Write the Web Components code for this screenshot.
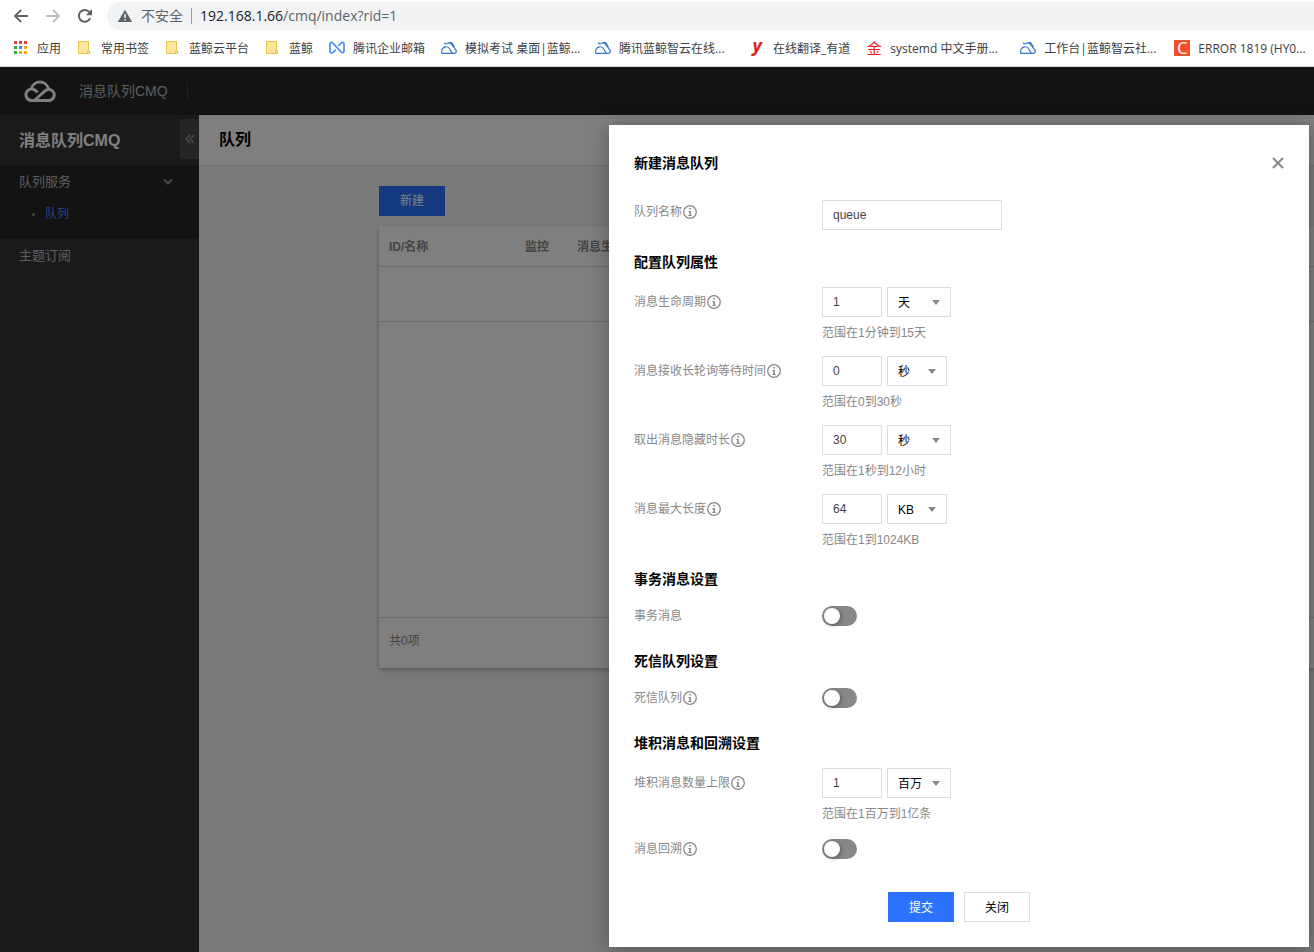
<!DOCTYPE html>
<html lang="zh-CN">
<head>
<meta charset="utf-8">
<title>消息队列CMQ</title>
<style>
  html, body { margin: 0; }
  body {
    min-height: 100vh;
    display: flex;
    flex-direction: column;
    font: 12px/18px "Liberation Sans", "Noto Sans CJK SC", sans-serif;
    color: #000;
    background: #fff;
    overflow-x: hidden;
  }
</style>
</head>
<body>
<browser-bar host="192.168.1.66" path="/cmq/index?rid=1">
  <book-mark icon="apps">应用</book-mark>
  <book-mark icon="folder">常用书签</book-mark>
  <book-mark icon="folder">蓝鲸云平台</book-mark>
  <book-mark icon="folder">蓝鲸</book-mark>
  <book-mark icon="mail">腾讯企业邮箱</book-mark>
  <book-mark icon="hill" wide>模拟考试 桌面|蓝鲸...</book-mark>
  <book-mark icon="hill" wide>腾讯蓝鲸智云在线...</book-mark>
  <book-mark icon="youdao">在线翻译_有道</book-mark>
  <book-mark icon="gold" wide>systemd 中文手册...</book-mark>
  <book-mark icon="hill" wide>工作台|蓝鲸智云社...</book-mark>
  <book-mark icon="csdn" wide>ERROR 1819 (HY0...</book-mark>
</browser-bar>

<cmq-app>
  <cmq-topbar slot="top">消息队列CMQ</cmq-topbar>
  <cmq-sidebar slot="side"></cmq-sidebar>
  <queue-page slot="main"></queue-page>
  <cmq-dialog slot="overlay" heading="新建消息队列">
    <form-section>
      <form-field compact label="队列名称" info value="queue" wide></form-field>
    </form-section>
    <form-section heading="配置队列属性">
      <form-field label="消息生命周期" info value="1" unit="天" roomy hint="范围在1分钟到15天"></form-field>
      <form-field label="消息接收长轮询等待时间" info value="0" unit="秒" hint="范围在0到30秒"></form-field>
      <form-field label="取出消息隐藏时长" info value="30" unit="秒" roomy hint="范围在1秒到12小时"></form-field>
      <form-field label="消息最大长度" info value="64" unit="KB" hint="范围在1到1024KB"></form-field>
    </form-section>
    <form-section heading="事务消息设置">
      <switch-field label="事务消息"></switch-field>
    </form-section>
    <form-section heading="死信队列设置">
      <switch-field label="死信队列" info></switch-field>
    </form-section>
    <form-section heading="堆积消息和回溯设置">
      <form-field label="堆积消息数量上限" info value="1" unit="百万" roomy hint="范围在1百万到1亿条"></form-field>
      <switch-field label="消息回溯" info></switch-field>
    </form-section>
    <cmq-button slot="actions" kind="primary">提交</cmq-button>
    <cmq-button slot="actions">关闭</cmq-button>
  </cmq-dialog>
</cmq-app>

<script>
const define = (name, render) => customElements.define(name, class extends HTMLElement {
  connectedCallback() {
    if (this.shadowRoot) return;
    this.attachShadow({ mode: "open" }).innerHTML = render(this);
  }
});

const ICONS = {
  back: `<svg width="16" height="16" viewBox="0 0 16 16" fill="none" stroke="#5f6368" stroke-width="1.8"><path d="M15 8H2.5M8.2 1.8 2 8l6.2 6.2"/></svg>`,
  forward: `<svg width="16" height="16" viewBox="0 0 16 16" fill="none" stroke="#babcbe" stroke-width="1.8"><path d="M1 8h12.5M7.8 1.8 14 8l-6.2 6.2"/></svg>`,
  reload: `<svg width="16" height="16" viewBox="0 0 16 16"><path d="M13.2 10.2A5.9 5.9 0 1 1 12.4 4.2" fill="none" stroke="#5f6368" stroke-width="2"/><path d="M15 1v6.2H8.8z" fill="#5f6368"/></svg>`,
  warn: `<svg width="16" height="16" viewBox="0 0 16 16"><path d="M8 1.8 15.2 14H.8z" fill="#5f6368"/><path d="M8 6v4M8 11v1.6" stroke="#f1f3f4" stroke-width="1.5"/></svg>`,
  apps: `<svg width="16" height="16" viewBox="0 0 16 16"><path fill="#ea4335" d="M1 1h3v3H1zM6 1h3v3H6zM11 1h3v3h-3z"/><path fill="#34a853" d="M1 6h3v3H1zM1 11h3v3H1z"/><path fill="#4285f4" d="M6 6h3v3H6z"/><path fill="#fbab05" d="M11 6h3v3h-3zM6 11h3v3H6zM11 11h3v3h-3z"/></svg>`,
  folder: `<svg width="16" height="16" viewBox="0 0 16 16"><path d="M1.500 1.500h10v9h1v3h-11z" fill="#fde69a" stroke="#e6c54a"/><path d="M10.500 13.500v-3h1" fill="none" stroke="#e6c54a"/></svg>`,
  mail: `<svg width="16" height="16" viewBox="0 0 16 16" fill="none" stroke="#4a8ff0" stroke-width="1.700"><path d="M6.800 9.600 4 12.500c-.9.900-3 .8-3-1V4c0-1.400 1.600-2.200 2.800-1L12 11.800c1.200 1.400 3 1.200 3-.5V4c0-1.600-1.800-2-2.800-1L9.300 6"/></svg>`,
  hill: `<svg width="16" height="16" viewBox="0 0 16 16" fill="none" stroke="#3476c8" stroke-width="1.200" stroke-linejoin="round"><path d="M11.500 13.300H.8c-.6-3.200.6-6 3.700-6.500 2.200-.3 3.600.8 4.600 2.700 1 1.800 1.400 2.700 2.400 3.800h1.700c2.200-.2 2.500-2.200 1.600-3.500L10.200 4C9 2.500 6.800 2.300 5.200 4.200M3.200 2.800l1.500 1.400M8 2.600h2.500l3 4.600"/></svg>`,
  youdao: `<b style="color:#e21a1a;font:italic bold 18px/14px 'Open Sans',sans-serif;padding-bottom:6px">y</b>`,
  gold: `<span style="color:#e8211c;font:15px/16px 'Noto Sans CJK SC',sans-serif">金</span>`,
  csdn: `<span style="background:#f0512b;color:#fff;font:16px/16px 'Open Sans',sans-serif;width:16px;text-align:center">C</span>`,
  cloud: `<svg width="32" height="24" viewBox="0 0 32 24" fill="none" stroke="#fff" stroke-width="3"><path d="M24.400 9.600A8.800 8.800 0 0 0 7.400 9.600M13.800 13.400 11.600 11.600A5.700 5.700 0 1 0 7.200 21.400H25A5.500 5.500 0 1 0 21 11.900L10.800 21"/></svg>`,
  collapse: `<svg width="10" height="10" viewBox="0 0 10 10" fill="none" stroke="#a0a0a0" stroke-width="1.200"><path d="M5 1 1 5l4 4M9 1 5 5l4 4"/></svg>`,
  chevron: `<svg width="10" height="8" viewBox="0 0 10 8" fill="none" stroke="#909090" stroke-width="2.200"><path d="m1 1.500 4 4 4-4"/></svg>`,
  info: `<svg width="14" height="14" viewBox="0 0 14 14"><circle cx="7" cy="7" r="6.300" fill="none" stroke="#888" stroke-width="1.300"/><path d="M6.200 3h1.700v1.600H6.200zM5.400 6h2.500v4h.9v1H5.300v-1h1V7h-.9z" fill="#888"/></svg>`,
  close: `<svg width="12" height="12" viewBox="0 0 12 12" fill="none" stroke="#888" stroke-width="2"><path d="m1 1 10 10M11 1 1 11"/></svg>`
};

define("ui-icon", el => `
  <style>:host { display: inline-flex; flex: none; align-items: center; justify-content: center; } svg { display: block; }</style>
  ${ICONS[el.getAttribute("name")]}`);

define("browser-bar", el => `
  <style>
    :host { display: block; background: #fff; border-bottom: 1px solid #d5d8da; font-family: "Open Sans", "Noto Sans CJK SC", sans-serif; overflow: hidden; }
    .nav { display: flex; align-items: center; gap: 16px; height: 28px; padding: 2px 0 0 13px; }
    button { border: 0; padding: 0; background: none; display: flex; }
    .address { flex: 1; display: flex; align-items: center; gap: 8px; height: 28px; padding-left: 10px; margin-left: -2px; border-radius: 14px 0 0 14px; background: #f1f3f4; font-size: 14px; line-height: 20px; color: #5f6368; white-space: nowrap; }
    .sep { width: 1px; height: 16px; background: #9aa0a6; }
    b { font-weight: normal; color: #202124; }
    .marks { display: flex; gap: 16px; height: 36px; align-items: center; padding-left: 13px; }
  </style>
  <div class="nav">
    <button aria-label="后退"><ui-icon name="back"></ui-icon></button>
    <button aria-label="前进"><ui-icon name="forward"></ui-icon></button>
    <button aria-label="刷新"><ui-icon name="reload"></ui-icon></button>
    <div class="address"><ui-icon name="warn"></ui-icon><span>不安全</span><i class="sep"></i><span><b>${el.getAttribute("host")}</b>${el.getAttribute("path")}</span></div>
  </div>
  <nav class="marks"><slot></slot></nav>`);

define("book-mark", el => `
  <style>
    :host { display: block; flex: none; }
    a { display: flex; align-items: center; gap: 8px; color: #3c4043; text-decoration: none; white-space: nowrap; font-size: 12px; line-height: 18px; }
    ui-icon { width: 16px; height: 16px; }
    span { padding-top: 2px; }
    :host([wide]) span { width: 114px; }
  </style>
  <a href="#"><ui-icon name="${el.getAttribute("icon")}"></ui-icon><span><slot></slot></span></a>`);

define("cmq-app", () => `
  <style>
    :host { flex: 1; display: grid; grid-template: 1fr / minmax(0, 1fr); }
    .stage, .scrim { grid-area: 1 / 1; }
    .stage { display: grid; grid-template: 48px 1fr / 199px minmax(0, 1fr); }
    .top { grid-column: 1 / -1; }
    .top, .side, .main { display: grid; }
    .scrim { z-index: 1; display: flex; justify-content: flex-end; align-items: flex-start; padding: 58px 5px 5px; background: rgba(0, 0, 0, .5); overflow: hidden; }
  </style>
  <div class="stage">
    <div class="top"><slot name="top"></slot></div>
    <div class="side"><slot name="side"></slot></div>
    <div class="main"><slot name="main"></slot></div>
  </div>
  <div class="scrim"><slot name="overlay"></slot></div>`);

define("cmq-topbar", () => `
  <style>
    :host { display: flex; align-items: center; padding-left: 24px; background: #262626; color: #bbb; font-size: 14px; line-height: 20px; }
    a { display: flex; margin-right: 23px; }
    .name { padding-right: 19px; border-right: 1px solid #40434c; }
  </style>
  <a href="#" aria-label="首页"><ui-icon name="cloud"></ui-icon></a>
  <span class="name"><slot></slot></span>`);

define("cmq-sidebar", () => `
  <style>
    :host { display: block; background: #343434; color: #bbb; font-size: 13px; }
    header { display: flex; align-items: flex-start; justify-content: space-between; height: 46px; padding: 4px 0 0 19px; }
    h2 { margin: 0; font-size: 16px; line-height: 44px; color: #fff; }
    header button { width: 19px; height: 40px; padding: 0; border: 0; background: #4b4b4b; border-radius: 2px 0 0 2px; display: grid; place-items: center; }
    a { display: flex; align-items: center; justify-content: space-between; height: 34px; padding: 0 26px 0 19px; color: inherit; text-decoration: none; }
    .group { background: #262626; padding-bottom: 10px; }
    .sub { height: 30px; padding-left: 32px; justify-content: flex-start; gap: 10px; font-size: 12px; color: #4a86ff; }
    .sub::before { content: ""; width: 3px; height: 3px; background: #777; }
  </style>
  <header><h2>消息队列CMQ</h2><button aria-label="收起"><ui-icon name="collapse"></ui-icon></button></header>
  <nav>
    <div class="group">
      <a href="#">队列服务<ui-icon name="chevron"></ui-icon></a>
      <a href="#" class="sub">队列</a>
    </div>
    <a href="#">主题订阅</a>
  </nav>`);

define("queue-page", () => `
  <style>
    :host { display: block; background: #f2f2f2; }
    header { height: 50px; box-sizing: border-box; display: flex; align-items: center; padding-left: 20px; background: #fff; }
    header + section { border-top: 1px solid #d8d8d8; }
    h1 { margin: 0; font-size: 16px; line-height: 24px; }
    section { padding: 20px 0 0 180px; }
    .card { margin-top: 10px; background: #fff; box-shadow: 0 2px 4px rgba(0, 0, 0, .25); color: #888; }
    table { width: 100%; border-collapse: collapse; table-layout: fixed; }
    th { height: 38px; padding: 2px 10px 0; text-align: left; color: #888; border-bottom: 1px solid #d8d8d8; }
    th:nth-child(1) { width: 116px; }
    th:nth-child(2) { width: 32px; }
    td { height: 54px; padding: 0; border-bottom: 1px solid #d8d8d8; }
    .space { height: 295px; }
    footer { padding: 14px 10px 18px; border-top: 1px solid #d8d8d8; }
  </style>
  <header><h1>队列</h1></header>
  <section>
    <cmq-button kind="primary">新建</cmq-button>
    <div class="card">
      <table>
        <thead><tr><th>ID/名称</th><th>监控</th><th>消息生命周期</th></tr></thead>
        <tbody><tr><td colspan="3"></td></tr></tbody>
      </table>
      <div class="space"></div>
      <footer>共0项</footer>
    </div>
  </section>`);

define("cmq-button", () => `
  <style>
    :host { display: block; width: 66px; }
    button { width: 100%; height: 30px; padding: 0; border: 1px solid #ddd; background: #fff; color: #000; font: inherit; }
    :host([slot="actions"]) button { padding-top: 2px; }
    :host([kind="primary"]) button { border-color: #2a72ff; background: #2a72ff; color: #fff; }
  </style>
  <button type="button"><slot></slot></button>`);

define("cmq-dialog", el => `
  <style>
    :host { display: block; width: 700px; max-width: 100%; box-sizing: border-box; padding: 25px; background: #fff; box-shadow: 0 2px 20px rgba(0, 0, 0, .3); }
    header { display: flex; align-items: center; justify-content: space-between; height: 26px; margin-bottom: 24px; }
    h3 { margin: 0; font-size: 14px; line-height: 20px; }
    header button { border: 0; padding: 0; background: none; display: flex; }
    .body { display: grid; gap: 22px; }
    .actions { display: flex; justify-content: center; gap: 10px; margin-top: 30px; }
  </style>
  <div role="dialog" aria-label="${el.getAttribute("heading")}">
    <header><h3>${el.getAttribute("heading")}</h3><button aria-label="关闭"><ui-icon name="close"></ui-icon></button></header>
    <div class="body"><slot></slot></div>
    <div class="actions"><slot name="actions"></slot></div>
  </div>`);

define("form-section", el => `
  <style>
    :host { display: block; }
    h4 { margin: 0 0 15px; font-size: 14px; line-height: 20px; }
    .rows { display: grid; gap: 16px; }
  </style>
  ${el.hasAttribute("heading") ? `<h4>${el.getAttribute("heading")}</h4>` : ""}
  <div class="rows"><slot></slot></div>`);

const ROW_STYLE = `
  :host { display: grid; grid-template-columns: 188px 1fr; align-items: start; color: #888; }
  .label { display: flex; align-items: center; gap: 1px; height: 30px; }
  :host([compact]) .label { height: 24px; }
`;
const labelPart = el => `<div class="label"><label for="control">${el.getAttribute("label")}</label>${el.hasAttribute("info") ? `<ui-icon name="info"></ui-icon>` : ""}</div>`;

define("form-field", el => `
  <style>
    ${ROW_STYLE}
    .controls { display: flex; gap: 5px; }
    input, select { box-sizing: border-box; height: 30px; padding: 0 10px; border: 1px solid #ddd; border-radius: 0; background: #fff; font: inherit; outline: 0; }
    input { width: 60px; color: #444; }
    :host([wide]) input { width: 180px; }
    .pick { position: relative; }
    select { appearance: none; width: 60px; padding-top: 2px; color: #000; }
    :host([roomy]) select { width: 64px; }
    .pick::after { content: ""; position: absolute; right: 11px; top: 13px; border: 4px solid transparent; border-top: 5px solid #888; border-bottom: 0; pointer-events: none; }
    p { margin: 7px 0 0; padding-top: 2px; line-height: 14px; }
  </style>
  ${labelPart(el)}
  <div>
    <div class="controls">
      <input id="control" type="text" value="${el.getAttribute("value")}">
      ${el.hasAttribute("unit") ? `<div class="pick"><select aria-label="单位"><option>${el.getAttribute("unit")}</option></select></div>` : ""}
    </div>
    ${el.hasAttribute("hint") ? `<p>${el.getAttribute("hint")}</p>` : ""}
  </div>`);

define("switch-field", el => `
  <style>
    ${ROW_STYLE}
    :host { height: 25px; }
    .label { height: 24px; }
    input { appearance: none; display: block; width: 35px; height: 20px; margin: 2px 0 0; padding: 2px; box-sizing: border-box; border-radius: 10px; background: #888; }
    input::before { content: ""; display: block; width: 16px; height: 16px; border-radius: 50%; background: #fff; box-shadow: 1px 1px 4px rgba(0, 0, 0, .4); }
    input:checked::before { margin-left: auto; }
  </style>
  ${labelPart(el)}
  <input id="control" type="checkbox" role="switch">`);
</script>
</body>
</html>
